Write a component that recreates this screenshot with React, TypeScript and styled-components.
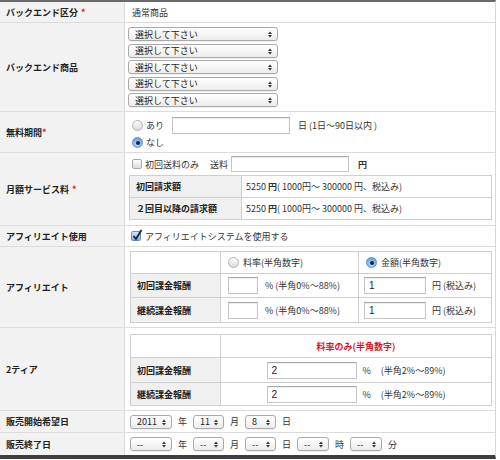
import React from "react";
import styled, { createGlobalStyle } from "styled-components";

const Global = createGlobalStyle`
  html, body { margin: 0; padding: 0; background: #fff; }
  body {
    font-family: "Noto Sans CJK JP", "Noto Sans", sans-serif;
    font-size: 9px;
    color: #333;
  }
  * { box-sizing: border-box; }
`;

const Form = styled.div`
  width: 496px;
  border-top: 2px solid #6a6a6a;
  border-bottom: 4px solid #3e3e3e;
  border-right: 1px solid #d8d8d8;
`;

const Row = styled.div<{ $h: number }>`
  display: grid;
  grid-template-columns: 125px 1fr;
  height: ${(p) => p.$h + 1}px;
  border-bottom: 1px solid #dcdcdc;
  &:last-child { border-bottom: none; height: ${(p) => p.$h}px; }
`;

const Label = styled.div`
  background: #f2f2f2;
  border-right: 1px solid #dcdcdc;
  padding-left: 6px;
  display: flex;
  align-items: center;
  font-weight: bold;
  color: #222;
`;

const Req = styled.span<{ $ml?: number }>`
  color: #e0101c;
  margin-left: ${(p) => p.$ml ?? 3}px;
`;

const Cell = styled.div<{ $pt?: number; $pb?: number; $gap?: number; $pl?: number }>`
  display: flex;
  flex-direction: column;
  justify-content: ${(p) => (p.$pt !== undefined ? "flex-start" : "center")};
  padding: ${(p) => p.$pt ?? 0}px 3px ${(p) => p.$pb ?? 0}px ${(p) => p.$pl ?? 4}px;
  gap: ${(p) => p.$gap ?? 0}px;
`;

const Line = styled.div<{ $h?: number; $gap?: number }>`
  display: flex;
  align-items: center;
  height: ${(p) => (p.$h ? `${p.$h}px` : "auto")};
  gap: ${(p) => p.$gap ?? 4}px;
  white-space: nowrap;
`;

const Text = styled.span<{ $bold?: boolean; $ml?: number }>`
  font-weight: ${(p) => (p.$bold ? "bold" : "normal")};
  margin-left: ${(p) => p.$ml ?? 0}px;
`;

const Spacer = styled.span<{ $w: number }>`
  width: ${(p) => p.$w}px;
  flex: none;
`;

/* ---------- select ---------- */
const SelWrap = styled.div<{ $w: number }>`
  position: relative;
  width: ${(p) => p.$w}px;
  height: 14px;
  border: 1px solid #a9a9a9;
  border-radius: 3px;
  background: linear-gradient(#ffffff, #ececec);
  box-shadow: 0 1px 0 rgba(0, 0, 0, 0.06);
  display: flex;
  align-items: center;
  padding-left: 6px;
  font-size: 9px;
  color: #222;
  flex: none;
`;

const SelArrows = styled.svg`
  position: absolute;
  right: 5px;
  top: 3px;
`;

const Select = ({ w, value }: { w: number; value: string }) => (
  <SelWrap $w={w}>
    {value}
    <SelArrows width="4" height="7" viewBox="0 0 4 7">
      <path d="M0 3 L2 0.5 L4 3 Z" fill="#333" />
      <path d="M0 4 L2 6.5 L4 4 Z" fill="#333" />
    </SelArrows>
  </SelWrap>
);

/* ---------- inputs ---------- */
const Input = styled.div<{ $w: number; $h?: number }>`
  width: ${(p) => p.$w}px;
  height: ${(p) => p.$h ?? 17}px;
  border: 1px solid #c6c6c6;
  border-top-color: #a9a9a9;
  box-shadow: inset 0 1px 1px rgba(0, 0, 0, 0.08);
  background: #fff;
  display: flex;
  align-items: center;
  padding-left: 4px;
  font-size: 10px;
  color: #222;
  flex: none;
  font-family: "Liberation Sans", sans-serif;
`;

const RadioBox = styled.span<{ $on?: boolean }>`
  width: 11px;
  height: 11px;
  border-radius: 50%;
  flex: none;
  display: inline-flex;
  align-items: center;
  justify-content: center;
  border: 1px solid ${(p) => (p.$on ? "#5c8fc6" : "#b0b0b0")};
  background: ${(p) =>
    p.$on
      ? "radial-gradient(circle at 50% 70%, #bfe0fb, #6fa9e4 70%, #4f8ed5)"
      : "linear-gradient(#fdfdfd, #dcdcdc)"};
  &::after {
    content: "";
    display: ${(p) => (p.$on ? "block" : "none")};
    width: 4px;
    height: 4px;
    border-radius: 50%;
    background: #1b2435;
  }
`;

const CheckBox = styled.span<{ $on?: boolean }>`
  position: relative;
  width: 10px;
  height: 10px;
  flex: none;
  border-radius: 2px;
  border: 1px solid ${(p) => (p.$on ? "#6b8fbd" : "#aaaaaa")};
  background: ${(p) =>
    p.$on ? "linear-gradient(#d4e8fb, #7db2e8)" : "linear-gradient(#fdfdfd, #dedede)"};
`;

const CheckMark = styled.svg`
  position: absolute;
  left: 0px;
  top: -3px;
`;

const Check = ({ on }: { on?: boolean }) => (
  <CheckBox $on={on}>
    {on && (
      <CheckMark width="11" height="12" viewBox="0 0 11 12">
        <path d="M1.5 7 L4 10 L9.5 1" stroke="#18233a" strokeWidth="1.8" fill="none" />
      </CheckMark>
    )}
  </CheckBox>
);

/* ---------- inner tables ---------- */
const Inner = styled.div<{ $cols: string; $rows: string }>`
  display: grid;
  grid-template-columns: ${(p) => p.$cols};
  grid-template-rows: ${(p) => p.$rows};
  gap: 1px;
  background: #cfcfcf;
  border: 1px solid #cfcfcf;
`;

const ICell = styled.div<{ $label?: boolean; $center?: boolean; $pl?: number }>`
  background: ${(p) => (p.$label ? "#f0f0f0" : "#fff")};
  display: flex;
  align-items: center;
  justify-content: ${(p) => (p.$center ? "center" : "flex-start")};
  padding-left: ${(p) => p.$pl ?? 6}px;
  font-weight: ${(p) => (p.$label ? "bold" : "normal")};
  color: ${(p) => (p.$label ? "#222" : "#333")};
  white-space: nowrap;
  gap: 4px;
`;

const RedHead = styled.span`
  color: #e8121e;
  font-weight: bold;
`;

const Amount = () => (
  <>
    5250 <b>円</b>( 1000円〜 300000 円、税込み)
  </>
);

export default function App() {
  return (
    <>
      <Global />
      <Form>
        <Row $h={20}>
          <Label>
            バックエンド区分<Req>*</Req>
          </Label>
          <Cell>
            <Text $ml={3}>通常商品</Text>
          </Cell>
        </Row>

        <Row $h={88}>
          <Label>バックエンド商品</Label>
          <Cell $pt={4} $gap={2.6} $pl={3}>
            {[0, 1, 2, 3, 4].map((i) => (
              <Select key={i} w={150} value="選択して下さい" />
            ))}
          </Cell>
        </Row>

        <Row $h={40}>
          <Label>
            無料期間<Req $ml={0}>*</Req>
          </Label>
          <Cell $pt={4} $pl={7}>
            <Line $h={18} $gap={3}>
              <RadioBox />
              <Text>あり</Text>
              <Spacer $w={2} />
              <Input $w={118} />
              <Text $ml={5}>日 (1日〜90日以内 )</Text>
            </Line>
            <Line $h={17} $gap={3}>
              <RadioBox $on />
              <Text>なし</Text>
            </Line>
          </Cell>
        </Row>

        <Row $h={72}>
          <Label>
            月額サービス料<Req>*</Req>
          </Label>
          <Cell $pt={3} $gap={3} $pl={4}>
            <Line $h={16} $gap={3}>
              <Spacer $w={0} />
              <Check />
              <Text>初回送料のみ</Text>
              <Text $ml={8}>送料</Text>
              <Input $w={118} $h={16} />
              <Text $bold $ml={6}>
                円
              </Text>
            </Line>
            <Inner $cols="111px 1fr" $rows="21px 21px">
              <ICell $label>初回請求額</ICell>
              <ICell $pl={4}>
                <span>
                  <Amount />
                </span>
              </ICell>
              <ICell $label>２回目以降の請求額</ICell>
              <ICell $pl={4}>
                <span>
                  <Amount />
                </span>
              </ICell>
            </Inner>
          </Cell>
        </Row>

        <Row $h={20}>
          <Label>アフィリエイト使用</Label>
          <Cell $pl={6}>
            <Line $gap={4}>
              <Check on />
              <Text>アフィリエイトシステムを使用する</Text>
            </Line>
          </Cell>
        </Row>

        <Row $h={80}>
          <Label>アフィリエイト</Label>
          <Cell $pt={4} $pl={5}>
            <Inner $cols="89px 137px 1fr" $rows="21px 23px 24px">
              <ICell />
              <ICell $pl={7}>
                <RadioBox />
                <Text>料率(半角数字)</Text>
              </ICell>
              <ICell $pl={7}>
                <RadioBox $on />
                <Text>金額(半角数字)</Text>
              </ICell>
              <ICell $label>初回課金報酬</ICell>
              <ICell $pl={7}>
                <Input $w={30} />
                <Text $ml={3}>% (半角0%〜88%)</Text>
              </ICell>
              <ICell $pl={5}>
                <Input $w={62}>1</Input>
                <Text $ml={2}>円 (税込み)</Text>
              </ICell>
              <ICell $label>継続課金報酬</ICell>
              <ICell $pl={7}>
                <Input $w={30} />
                <Text $ml={3}>% (半角0%〜88%)</Text>
              </ICell>
              <ICell $pl={5}>
                <Input $w={62}>1</Input>
                <Text $ml={2}>円 (税込み)</Text>
              </ICell>
            </Inner>
          </Cell>
        </Row>

        <Row $h={82}>
          <Label>2ティア</Label>
          <Cell $pt={6} $pl={5}>
            <Inner $cols="89px 1fr" $rows="22px 24px 22px">
              <ICell />
              <ICell $center $pl={0}>
                <RedHead>料率のみ(半角数字)</RedHead>
              </ICell>
              <ICell $label>初回課金報酬</ICell>
              <ICell $center $pl={0}>
                <Input $w={90} $h={17}>2</Input>
                <Text $ml={2}>%</Text>
                <Text $ml={6}>(半角2%〜89%)</Text>
              </ICell>
              <ICell $label>継続課金報酬</ICell>
              <ICell $center $pl={0}>
                <Input $w={90} $h={17}>2</Input>
                <Text $ml={2}>%</Text>
                <Text $ml={6}>(半角2%〜89%)</Text>
              </ICell>
            </Inner>
          </Cell>
        </Row>

        <Row $h={21}>
          <Label>販売開始希望日</Label>
          <Cell $pl={5}>
            <Line $gap={6}>
              <Select w={42} value="2011" />
              <Text>年</Text>
              <Select w={31} value="11" />
              <Text>月</Text>
              <Select w={31} value="8" />
              <Text>日</Text>
            </Line>
          </Cell>
        </Row>

        <Row $h={22}>
          <Label>販売終了日</Label>
          <Cell $pl={5}>
            <Line $gap={6}>
              <Select w={42} value="--" />
              <Text>年</Text>
              <Select w={31} value="--" />
              <Text>月</Text>
              <Select w={31} value="--" />
              <Text>日</Text>
              <Select w={32} value="--" />
              <Text>時</Text>
              <Select w={32} value="--" />
              <Text>分</Text>
            </Line>
          </Cell>
        </Row>
      </Form>
    </>
  );
}
